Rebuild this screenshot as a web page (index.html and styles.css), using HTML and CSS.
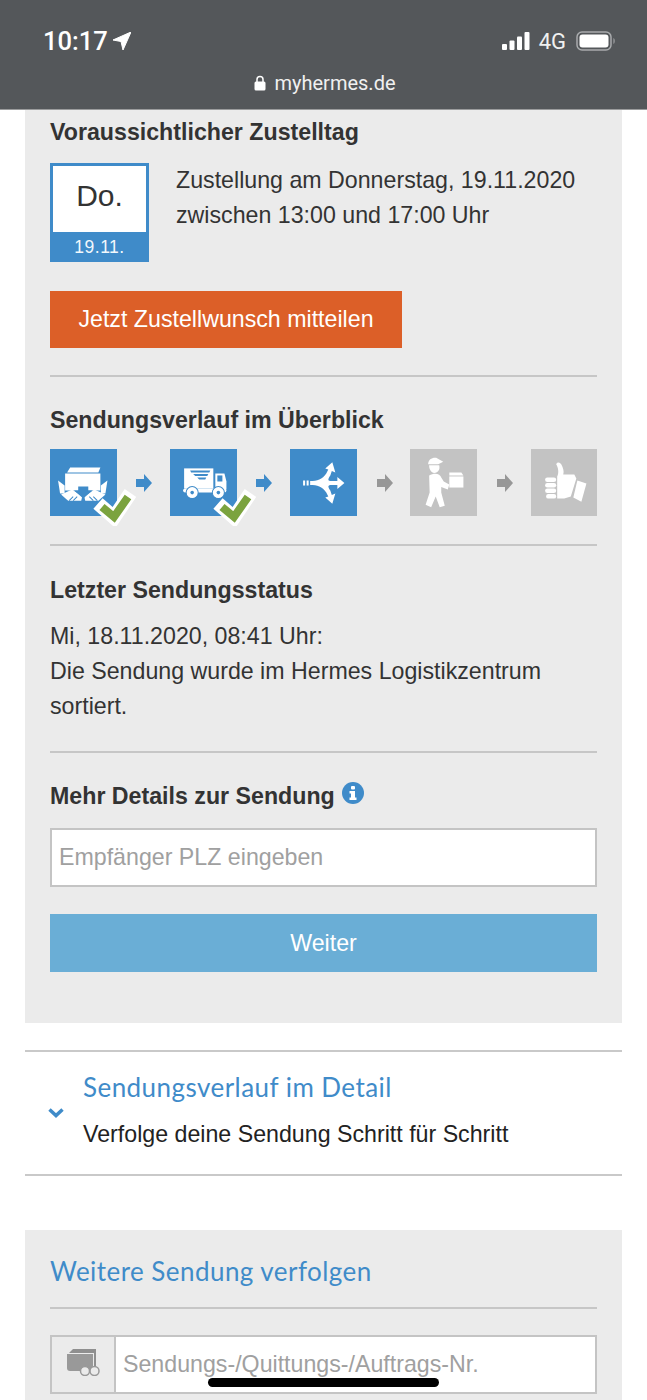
FILE: index.html
```html
<!DOCTYPE html>
<html lang="de">
<head>
    <meta charset="UTF-8">
    <meta name="viewport" content="width=device-width, initial-scale=1.0">
    <title>myhermes.de - Sendungsverfolgung</title>
    <link rel="stylesheet" href="styles.css">
</head>
<body>
    <header class="browser-bar">
        <div class="status-row">
            <div class="status-left">
                <span class="clock">10:17</span>
                <svg class="location-arrow" viewBox="0 0 18 18"><path d="M18 0 L0 8 L8 9.5 L10 18 Z" fill="#fff" stroke="#fff" stroke-width="1" stroke-linejoin="round"/></svg>
            </div>
            <div class="status-right">
                <svg class="signal" viewBox="0 0 28 18" fill="#fff">
                    <rect x="0" y="12" width="5" height="6" rx="1"/>
                    <rect x="7.5" y="8.5" width="5" height="9.5" rx="1"/>
                    <rect x="15" y="4.5" width="5" height="13.5" rx="1"/>
                    <rect x="22.5" y="0" width="5" height="18" rx="1"/>
                </svg>
                <span class="network">4G</span>
                <svg class="battery" viewBox="0 0 40 20">
                    <rect x="1" y="1" width="34" height="18" rx="5" fill="none" stroke="#a9abad" stroke-width="1.5"/>
                    <rect x="3.5" y="3.5" width="29" height="13" rx="3" fill="#fff"/>
                    <path d="M37.5 7 C39 7.6 39 12.4 37.5 13 Z" fill="#a9abad"/>
                </svg>
            </div>
        </div>
        <div class="url-row">
            <svg class="lock" viewBox="0 0 12 16"><path d="M3 7 V4.4 a3 3 0 0 1 6 0 V7" fill="none" stroke="#fff" stroke-width="1.5"/><rect x="0.5" y="6.5" width="11" height="9" rx="1.5" fill="#fff"/></svg>
            <span>myhermes.de</span>
        </div>
    </header>

    <main>
        <section class="card">
            <h2>Voraussichtlicher Zustelltag</h2>
            <div class="delivery">
                <div class="date-box">
                    <div class="date-day">Do.</div>
                    <div class="date-num">19.11.</div>
                </div>
                <p class="delivery-text">Zustellung am Donnerstag, 19.11.2020<br>zwischen 13:00 und 17:00 Uhr</p>
            </div>
            <button class="btn-orange">Jetzt Zustellwunsch mitteilen</button>

            <hr class="divider">

            <h2>Sendungsverlauf im Überblick</h2>
            <div class="steps">
                <div class="step step-done">
                    <svg viewBox="0 0 66 66" fill="#fff">
                        <path d="M20 18 H50 L48 23 H17 Z"/>
                        <path d="M15 24 H50 V41 H15 Z"/>
                        <path d="M8 31 L14.5 36 V44 L10 44 Z"/>
                        <path d="M57 31 L50.5 36 V44 L55 44 Z"/>
                        <path d="M11 45 L22 40 L32 47 L31 51 H18 Z"/>
                        <path d="M55 45 L44 40 L34 47 L35 51 H48 Z"/>
                        <path d="M28 37 H38 V41 H42 L33 49 L24 41 H28 Z" fill="#3f8bc9"/>
                        <path d="M19 51 L23 47 M23 51 L27 47 M39 47 L43 51 M43 47 L47 51" stroke="#3f8bc9" stroke-width="1"/>
                    </svg>
                    <svg class="check" viewBox="0 0 44 38"><path d="M6 15.5 L22 29.5 L38.5 5" fill="none" stroke="#fff" stroke-width="14"/><path d="M10 19 L22 29 L36 9" fill="none" stroke="#7ba33f" stroke-width="8"/></svg>
                </div>
                <svg class="arrow arrow-blue" viewBox="0 0 16 18"><path d="M0 5 H8 V0 L16 9 L8 18 V13 H0 Z"/></svg>
                <div class="step step-done">
                    <svg viewBox="0 0 66 66" fill="#fff">
                        <path d="M14 19 H43 V39 H14 Z"/>
                        <path d="M20 21 H40 L39 23 H21 Z M23 24.5 H38 L37 26.5 H25 Z M27 28 H36 L35 30 H29 Z" fill="#3f8bc9"/>
                        <path d="M45 24 H54 L56 32 V40 H45 Z"/>
                        <rect x="47" y="26" width="5" height="6" fill="#3f8bc9"/>
                        <rect x="13" y="39" width="43" height="4" rx="2"/>
                        <circle cx="22" cy="43" r="6" stroke="#3f8bc9"/>
                        <circle cx="48" cy="43" r="6" stroke="#3f8bc9"/>
                        <circle cx="22" cy="43" r="1.8" fill="#3f8bc9"/>
                        <circle cx="48" cy="43" r="1.8" fill="#3f8bc9"/>
                    </svg>
                    <svg class="check" viewBox="0 0 44 38"><path d="M6 15.5 L22 29.5 L38.5 5" fill="none" stroke="#fff" stroke-width="14"/><path d="M10 19 L22 29 L36 9" fill="none" stroke="#7ba33f" stroke-width="8"/></svg>
                </div>
                <svg class="arrow arrow-blue" viewBox="0 0 16 18"><path d="M0 5 H8 V0 L16 9 L8 18 V13 H0 Z"/></svg>
                <div class="step">
                    <svg viewBox="0 0 66 66" fill="#fff">
                        <rect x="13" y="31" width="2" height="5"/>
                        <rect x="16.5" y="31" width="2" height="5"/>
                        <path d="M20 31.5 C27 31.5 32 30 36 24 L38 20 L35 19 L42 13 L45 23 L41.5 21.5 L40 26 C38 29 37 31 40 31.5 H47 V27.5 L54 33.5 L47 39.5 V35.5 H40 C37 36 38 38 40 41 L41.5 45.5 L45 44 L42 54 L35 48 L38 47 L36 43 C32 37 27 35.5 20 35.5 Z"/>
                    </svg>
                </div>
                <svg class="arrow arrow-grey" viewBox="0 0 16 18"><path d="M0 5 H8 V0 L16 9 L8 18 V13 H0 Z"/></svg>
                <div class="step step-todo">
                    <svg viewBox="0 0 66 66" fill="#fff">
                        <path d="M18 15 C18 10 22 8 26 8.5 L33 12.5 L28 15 Z"/>
                        <path d="M19 16 H29 C30 20 28 23.5 24 23.5 C21 23.5 19 20 19 16 Z"/>
                        <path d="M19 26 C24 23 30 24 31 28 L33.5 32 L39 35 L37.5 40 L31 37.5 V43 L34.5 56 L29.5 57.5 L25.5 47 L21 57.5 L15.5 55 L19.5 43 Z"/>
                        <path d="M39 23 H51 L53 26 H39 Z"/>
                        <rect x="39" y="27" width="14" height="11"/>
                    </svg>
                </div>
                <svg class="arrow arrow-grey" viewBox="0 0 16 18"><path d="M0 5 H8 V0 L16 9 L8 18 V13 H0 Z"/></svg>
                <div class="step step-todo">
                    <svg viewBox="0 0 66 66" fill="#fff">
                        <rect x="14" y="28" width="11" height="4.5" rx="2.2"/>
                        <rect x="14" y="33.5" width="11" height="4.5" rx="2.2"/>
                        <rect x="14" y="39" width="11" height="4.5" rx="2.2"/>
                        <rect x="15" y="44.5" width="10" height="4.5" rx="2.2"/>
                        <path d="M26 27 C28 24 27 18 25 15 C26 12 29 13 30 15 C32 19 33 22 32 25 H43 L45 29 L39.5 47 L33 49 H26 Z"/>
                        <path d="M46 31 L55 34 L50 52 L42 48 Z"/>
                    </svg>
                </div>
            </div>

            <hr class="divider divider-steps">

            <h2>Letzter Sendungsstatus</h2>
            <p class="status-text">Mi, 18.11.2020, 08:41 Uhr:<br>Die Sendung wurde im Hermes Logistikzentrum<br>sortiert.</p>

            <hr class="divider divider-status">

            <h2 class="details-heading">Mehr Details zur Sendung
                <svg class="info" viewBox="0 0 22 22"><circle cx="11" cy="11" r="11" fill="#3f8bc9"/><rect x="9" y="4" width="4" height="3.4" rx="1" fill="#fff"/><path d="M7.5 9 H13 V15.4 H14.5 V18 H7.5 V15.4 H9 V11.5 H7.5 Z" fill="#fff"/></svg>
            </h2>
            <input class="text-input" type="text" placeholder="Empfänger PLZ eingeben">
            <button class="btn-blue">Weiter</button>
        </section>

        <section class="accordion">
            <svg class="chevron" viewBox="0 0 16 10"><path d="M1.5 1.5 L8 7.5 L14.5 1.5" fill="none" stroke="#3f8bc9" stroke-width="3.5"/></svg>
            <div>
                <h3 class="blue-title">Sendungsverlauf im Detail</h3>
                <p class="accordion-text">Verfolge deine Sendung Schritt für Schritt</p>
            </div>
        </section>

        <section class="card card-track">
            <h3 class="blue-title">Weitere Sendung verfolgen</h3>
            <hr class="divider divider-track">
            <div class="track-input">
                <div class="track-icon">
                    <svg viewBox="0 0 33 27">
                        <path d="M2 4 L6 0 H29 V4 Z" fill="#8f8f8f"/>
                        <path d="M0 5 H26 V22 H3 C1 22 0 21 0 19 Z" fill="#999"/>
                        <rect x="27" y="3" width="2" height="15" fill="#8f8f8f"/>
                        <rect x="18" y="19" width="10" height="3" fill="#999"/>
                        <circle cx="18" cy="22" r="4.5" fill="#ebebeb" stroke="#999" stroke-width="1.5"/>
                        <circle cx="27.5" cy="22" r="4.5" fill="#ebebeb" stroke="#999" stroke-width="1.5"/>
                    </svg>
                </div>
                <input class="track-field" type="text" placeholder="Sendungs-/Quittungs-/Auftrags-Nr.">
            </div>
        </section>
    </main>

    <div class="home-indicator"></div>
</body>
</html>
```

FILE: styles.css
```css
html, body {
    height: 1400px;
    overflow: hidden;
}
body {
    margin: 0;
    position: relative;
    font-family: 'Liberation Sans', Arial, sans-serif;
    font-size: 23.2px;
    color: #333;
    background-color: #fff;
}
.browser-bar {
    height: 109px;
    background-color: #54575a;
    border-bottom: 1px solid #9b9c9d;
    color: #fff;
}
.status-row {
    display: flex;
    justify-content: space-between;
    align-items: center;
    padding: 27px 31px 0 43px;
    height: 28px;
}
.status-left, .status-right {
    display: flex;
    align-items: center;
}
.clock {
    font-family: 'Roboto', 'Liberation Sans', sans-serif;
    font-size: 25.5px;
    font-weight: 500;
    line-height: 28px;
}
.location-arrow {
    width: 18px;
    height: 18px;
    margin-left: 5px;
}
.signal {
    width: 28px;
    height: 18px;
}
.network {
    font-family: 'Roboto', 'Liberation Sans', sans-serif;
    font-size: 22px;
    color: #f0f0f0;
    margin-left: 9px;
}
.battery {
    width: 40px;
    height: 20px;
    margin-left: 10px;
}
.url-row {
    display: flex;
    justify-content: center;
    align-items: center;
    gap: 8px;
    margin-top: 16px;
    padding-left: 3px;
    font-family: 'Roboto', 'Liberation Sans', sans-serif;
    font-size: 20px;
    color: #f0f0f0;
}
.lock {
    width: 12px;
    height: 16px;
}

.card {
    background-color: #ebebeb;
    margin: 0 25px;
    padding: 9px 25px 51px;
}
h2 {
    font-size: 23.2px;
    line-height: 26px;
    margin: 0;
    color: #333;
}
.delivery {
    display: flex;
    gap: 27px;
    margin-top: 18px;
}
.date-box {
    width: 99px;
    height: 99px;
    box-sizing: border-box;
    border: 3px solid #3f8bc9;
    border-bottom: none;
    background-color: #fff;
    display: flex;
    flex-direction: column;
}
.date-day {
    flex: 1;
    display: flex;
    justify-content: center;
    align-items: center;
    padding-bottom: 6px;
    font-size: 30px;
}
.date-num {
    height: 30px;
    margin: 0 -3px;
    background-color: #3f8bc9;
    color: #f2f8fc;
    font-size: 17.5px;
    letter-spacing: 0.5px;
    text-align: center;
    line-height: 30px;
}
.delivery-text {
    margin: 0;
    line-height: 35px;
    color: #333;
}
button {
    display: block;
    border: none;
    color: #fff;
    font-family: 'Liberation Sans', Arial, sans-serif;
    font-size: 23.2px;
    cursor: pointer;
}
.btn-orange {
    width: 352px;
    height: 57px;
    margin-top: 29px;
    background-color: #dc5f28;
}
.divider {
    border: none;
    height: 2px;
    background-color: #c6c6c6;
    margin: 27px 0 30px;
}
.steps {
    display: flex;
    justify-content: space-between;
    align-items: center;
    margin-top: 16px;
}
.step {
    position: relative;
    width: 66.5px;
    height: 67px;
    background-color: #3f8bc9;
}
.step svg {
    display: block;
    width: 100%;
    height: 100%;
}
.step-todo {
    background-color: #c3c3c3;
}
.step .check {
    position: absolute;
    left: 42px;
    top: 39px;
    width: 44px;
    height: 38px;
}
.arrow {
    width: 16px;
    height: 18px;
    margin-left: 2px;
}
.arrow-blue {
    fill: #3f8bc9;
}
.arrow-grey {
    fill: #979797;
}
.divider-steps {
    margin: 28px 0 31px;
}
.status-text {
    margin: 16px 0 0;
    line-height: 35px;
}
.divider-status {
    margin: 27px 0 30px;
}
.details-heading {
    display: flex;
    align-items: center;
    gap: 7px;
}
.info {
    width: 22px;
    height: 22px;
    margin-top: -6px;
}
.text-input {
    display: block;
    width: 100%;
    height: 59px;
    box-sizing: border-box;
    margin-top: 19px;
    padding: 0 7px;
    border: 2px solid #c4c4c4;
    background-color: #fff;
    font-family: 'Liberation Sans', Arial, sans-serif;
    font-size: 23.2px;
}
::placeholder {
    color: #a0a0a0;
    opacity: 1;
}
.btn-blue {
    width: 100%;
    height: 58px;
    margin-top: 27px;
    background-color: #6aaed6;
}

.accordion {
    display: flex;
    align-items: center;
    gap: 19px;
    margin: 27px 25px 0;
    padding: 19px 0 27px 23px;
    border-top: 2px solid #c9c9c9;
    border-bottom: 2px solid #c9c9c9;
}
.chevron {
    width: 16px;
    height: 10px;
    margin-top: 8px;
}
.blue-title {
    font-family: 'Lato', 'Noto Sans', sans-serif;
    font-size: 26px;
    font-weight: 400;
    letter-spacing: 0.45px;
    line-height: 32px;
    margin: 0;
    color: #3f8bc9;
}
.accordion-text {
    margin: 18px 0 0;
    line-height: 26px;
    color: #222;
}
.card-track {
    margin-top: 54px;
    padding-top: 25px;
}
.divider-track {
    margin: 20px 0 26px;
}
.track-input {
    display: flex;
    height: 59px;
    box-sizing: border-box;
    border: 2px solid #c4c4c4;
    background-color: #fff;
}
.track-icon {
    width: 64px;
    flex-shrink: 0;
    box-sizing: border-box;
    border-right: 2px solid #c4c4c4;
    background-color: #ebebeb;
    display: flex;
    justify-content: center;
    align-items: center;
}
.track-icon svg {
    width: 33px;
    height: 27px;
    margin-top: -4px;
}
.track-field {
    flex: 1;
    min-width: 0;
    border: none;
    padding: 0 7px;
    background: none;
    font-family: 'Liberation Sans', Arial, sans-serif;
    font-size: 23.2px;
}
.home-indicator {
    position: absolute;
    left: 208px;
    top: 1378px;
    width: 231px;
    height: 9px;
    border-radius: 5px;
    background-color: #000;
}
```
